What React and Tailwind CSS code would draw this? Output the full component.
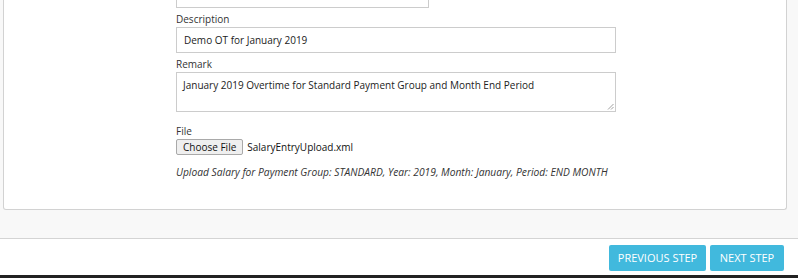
import React from "react";

const font = { fontFamily: '"Open Sans", "Noto Sans", sans-serif' };

const Field = ({ label, children, className = "" }) => (
  <div className={className}>
    <label className="block text-[10px] leading-[16px] text-[#333]">{label}</label>
    {children}
  </div>
);

export default function App() {
  return (
    <div className="w-[798px] h-[278px] overflow-hidden bg-white flex flex-col" style={font}>
      {/* form area */}
      <div className="h-[239px] bg-[#f8f8f8] border-b border-[#d4d4d4] px-[3px]">
        <div className="w-[784px] h-[210px] bg-white border border-t-0 border-[#d2d2d2] rounded-b-[3px] overflow-hidden">
          <div className="ml-[172px] w-[440px]">
            {/* input cut off at the top */}
            <div className="w-[253px] h-[26px] -mt-[18px] border border-[#ccc] bg-white" />

            <Field label="Description" className="mt-[3px]">
              <div className="h-[26px] border border-[#ccc] px-[7px] flex items-center text-[10px] text-[#222]">
                Demo OT for January 2019
              </div>
            </Field>

            <Field label="Remark" className="mt-[3px]">
              <div className="relative h-[40px] border border-[#ccc] px-[6px] pt-[5px] text-[10px] leading-[14px] text-[#222]">
                January 2019 Overtime for Standard Payment Group and Month End Period
                <svg className="absolute right-[1px] bottom-[1px]" width="7" height="7" viewBox="0 0 7 7">
                  <path d="M6.5 1L1 6.5M6.5 4L4 6.5" stroke="#888" strokeWidth="0.8" />
                </svg>
              </div>
            </Field>

            <Field label="File" className="mt-[11px]">
              <div className="flex items-center gap-[4px]">
                <span className="h-[16px] px-[6px] flex items-center border border-[#a9a9a9] rounded-[2px] bg-[#efefef] text-[10px] text-[#111]">
                  Choose File
                </span>
                <span className="text-[10px] text-[#111]">SalaryEntryUpload.xml</span>
              </div>
            </Field>

            <p className="mt-[10px] text-[10.25px] italic leading-[14px] text-[#333]">
              Upload Salary for Payment Group: STANDARD, Year: 2019, Month: January, Period: END MONTH
            </p>
          </div>
        </div>
      </div>

      {/* footer */}
      <div className="flex-1 flex justify-end items-start gap-[4px] pr-[14px] pt-[6px]">
        <button
          className="h-[26px] w-[97px] rounded-[2px] bg-[#41b9dd] text-[11px] text-white"
          style={{ fontFamily: '"Liberation Sans Narrow", "Open Sans", sans-serif' }}
        >
          PREVIOUS STEP
        </button>
        <button
          className="h-[26px] w-[74px] rounded-[2px] bg-[#41b9dd] text-[11px] text-white"
          style={{ fontFamily: '"Liberation Sans Narrow", "Open Sans", sans-serif' }}
        >
          NEXT STEP
        </button>
      </div>
      <div className="h-[3px] bg-[#222]" />
    </div>
  );
}
